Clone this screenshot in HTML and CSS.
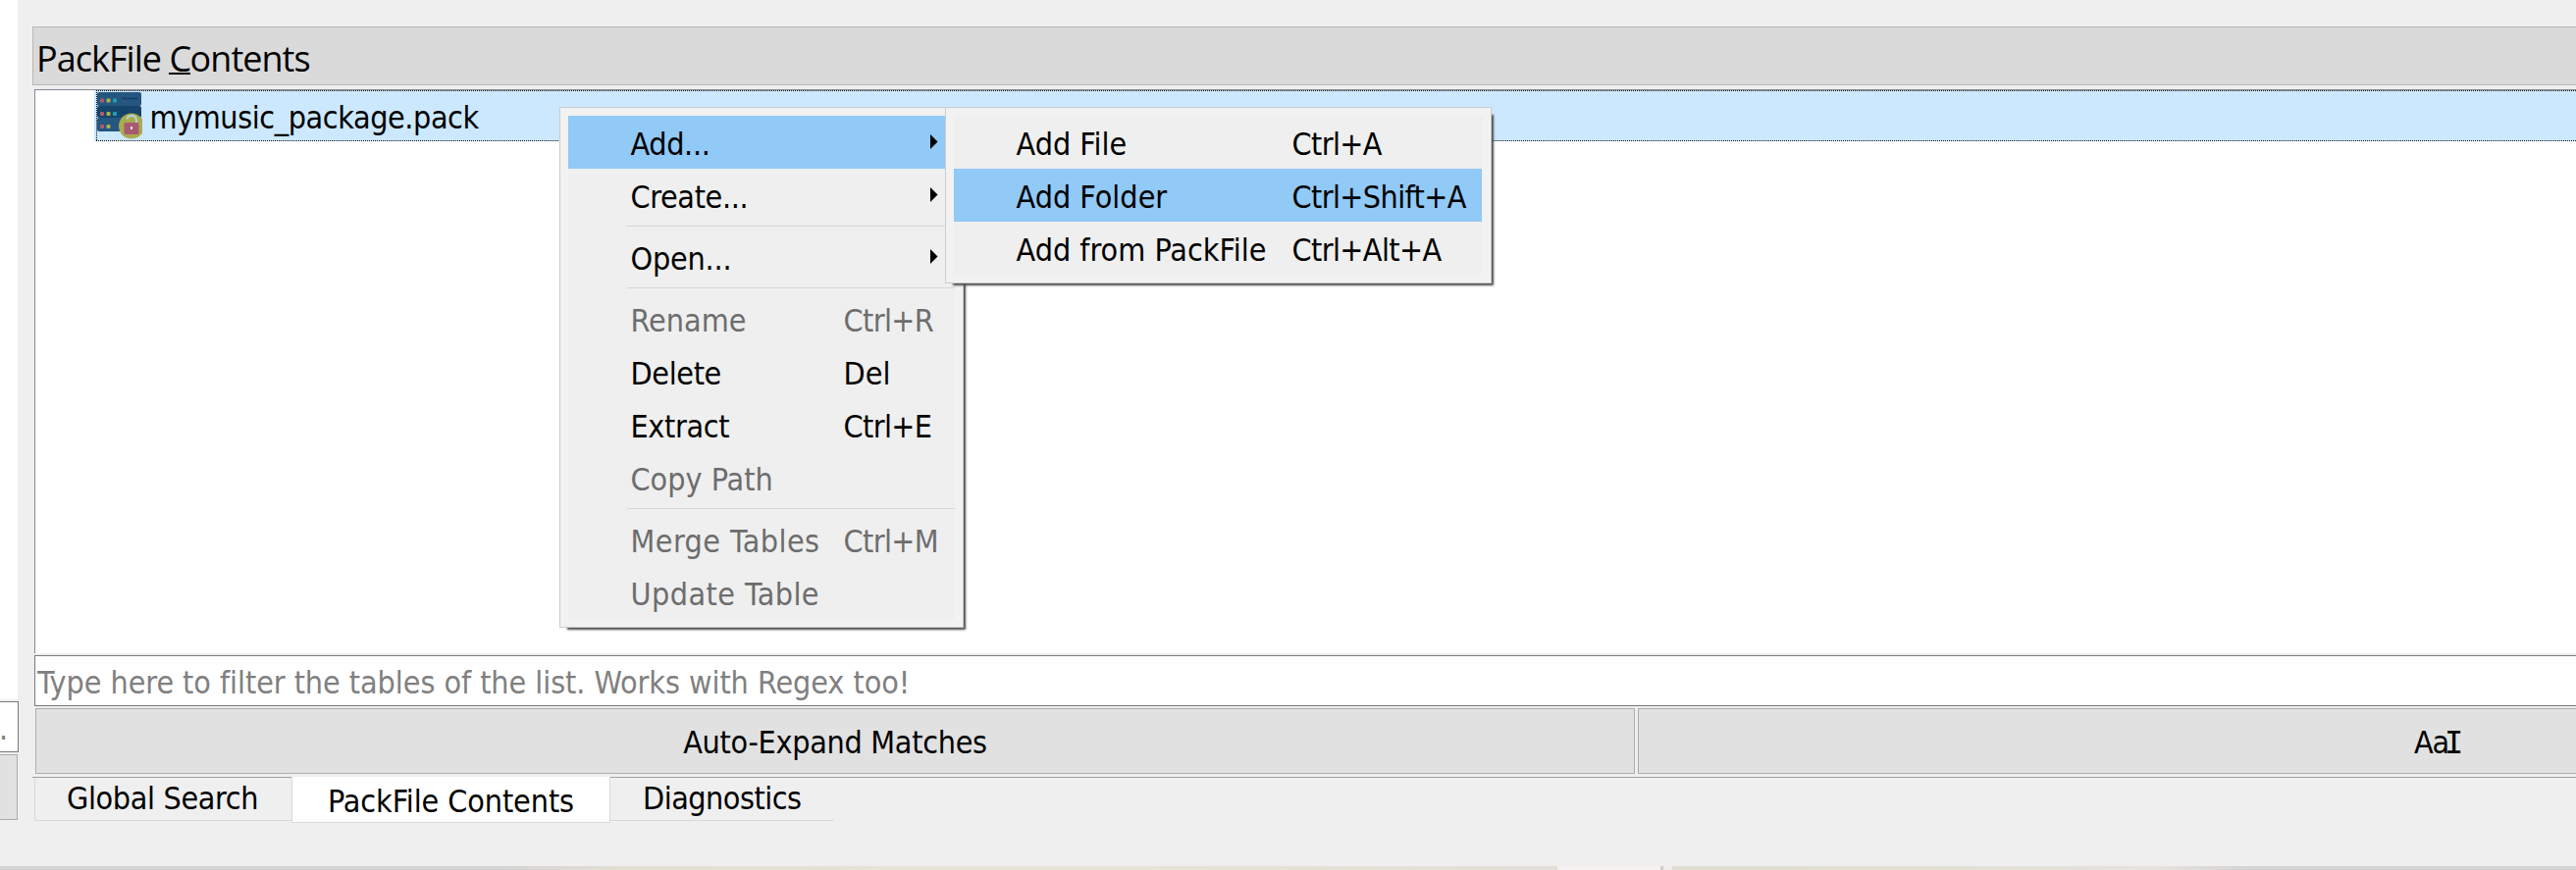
FILE: index.html
```html
<!DOCTYPE html>
<html lang="en">
<head>
<meta charset="utf-8">
<title>PackFile Contents</title>
<link rel="stylesheet" href="styles.css">
</head>
<body>
<div class="window">
  <div class="workspace">
    <aside class="side">
      <div class="side-view"></div>
      <div class="side-input">.</div>
      <div class="side-button"></div>
    </aside>
    <main class="dock">
      <header class="dock-title">PackFile <span class="mnemonic">C</span>ontents</header>
      <section class="tree">
        <div class="tree-row">
          <svg class="pack-icon" width="46" height="50" viewBox="0 0 46 50">
            <rect x="0" y="1" width="45" height="14" rx="2" fill="#24567f"/>
            <rect x="0" y="15" width="45" height="12" rx="2" fill="#16446a"/>
            <rect x="0" y="27" width="45" height="14" rx="2" fill="#24567f"/>
            <path d="M25 7.5h16M25 21h6" stroke="#143d60" stroke-width="1.6"/>
            <g fill="#ac5a73"><rect x="3" y="7.500" width="4" height="4" rx="1"/><rect x="3" y="21" width="4" height="4" rx="1"/><rect x="3" y="34" width="4" height="4" rx="1"/></g>
            <g fill="#aead53"><rect x="9.500" y="7.500" width="4" height="4" rx="1"/><rect x="9.500" y="21" width="4" height="4" rx="1"/><rect x="9.500" y="34" width="4" height="4" rx="1"/></g>
            <g fill="#20a2a8"><rect x="16" y="7.500" width="4" height="4" rx="1"/><rect x="16" y="21" width="4" height="4" rx="1"/></g>
            <circle cx="35" cy="35.500" r="13" fill="#aaab50"/>
            <path d="M30.500 28.500c1-5 9.500-5 9.500 1.500v4" fill="none" stroke="#b5d3df" stroke-width="1.900"/>
            <rect x="27.500" y="32" width="15" height="12" rx="1.500" fill="#a95a70"/>
            <rect x="34" y="36" width="2" height="3" fill="#d6e4f0"/>
          </svg>
          <span class="file-name">mymusic_package.pack</span>
        </div>
      </section>
      <div class="filter">Type here to filter the tables of the list. Works with Regex too!</div>
      <div class="buttons">
        <div class="button expand">Auto-Expand Matches</div>
        <div class="button case">Aa<span class="serif-i">I</span></div>
      </div>
      <nav class="tabs">
        <div class="tab search">Global Search</div>
        <div class="tab active">PackFile Contents</div>
        <div class="tab diagnostics">Diagnostics</div>
      </nav>
    </main>
  </div>
  <div class="backdrop"></div>

  <div class="menu context">
    <div class="item selected"><span class="label tight">Add...</span><i class="arrow"></i></div>
    <div class="item"><span class="label tight">Create...</span><i class="arrow"></i></div>
    <hr class="separator">
    <div class="item"><span class="label snug">Open...</span><i class="arrow"></i></div>
    <hr class="separator">
    <div class="item disabled"><span class="label">Rename</span><span class="keys">Ctrl+R</span></div>
    <div class="item"><span class="label tight">Delete</span><span class="keys plain">Del</span></div>
    <div class="item"><span class="label tight">Extract</span><span class="keys">Ctrl+E</span></div>
    <div class="item disabled"><span class="label">Copy Path</span></div>
    <hr class="separator">
    <div class="item disabled"><span class="label loose">Merge Tables</span><span class="keys">Ctrl+M</span></div>
    <div class="item disabled"><span class="label loose">Update Table</span></div>
  </div>

  <div class="menu submenu">
    <div class="item"><span class="label">Add File</span><span class="keys">Ctrl+A</span></div>
    <div class="item selected"><span class="label">Add Folder</span><span class="keys">Ctrl+Shift+A</span></div>
    <div class="item"><span class="label">Add from PackFile</span><span class="keys">Ctrl+Alt+A</span></div>
  </div>
</div>
</body>
</html>
```
FILE: styles.css
```css
* { box-sizing: border-box; }

body {
  margin: 0;
  overflow: hidden;
  font: 32px "DejaVu Sans Condensed", "DejaVu Sans", sans-serif;
  color: #000;
  white-space: nowrap;
}

.window {
  position: relative;
  display: flex;
  flex-direction: column;
  height: 887px;
  background: #efefef;
  overflow: hidden;
}

.workspace { display: flex; height: 883px; }

.backdrop {
  height: 4px;
  background:
    linear-gradient(90deg, transparent 1587px, #f3f2f0 1587px 1692px, #d2cdc9 1692px 1695px, #efede9 1695px 1704px, transparent 1704px),
    linear-gradient(90deg, #d3d3d3 0 490px, #e2dfd5 640px, #e6e4d9 1000px, #e2dfd8 1600px, #e2ddd2 1750px, #e5e2dc 2200px, #d3d3d3 2300px);
}

/* Neighbouring panel, cut off at the window's left edge */
.side { width: 33px; }
.side-view { width: 18px; height: 713px; background: #fff; }
.side-input {
  width: 19px;
  height: 52px;
  margin: 2px 0;
  border: 1px solid #7a7a7a;
  border-left: 0;
  background: #fff;
  color: #808080;
  line-height: 54px;
  text-indent: -1px;
}
.side-button {
  width: 18px;
  height: 67px;
  border: 1px solid #adadad;
  border-left: 0;
  background: #e1e1e1;
}

.dock { flex: 1; display: flex; flex-direction: column; padding-top: 27px; }

.dock-title {
  height: 60px;
  padding: 7px 0 0 3px;
  border: 1px solid #b9b9b9;
  border-right: 0;
  background: #dadada;
  font: 36px/49px "Open Sans", "Noto Sans", sans-serif;
  letter-spacing: -0.97px;
}
.mnemonic {
  display: inline-block;
  height: 41px;
  border-bottom: 2px solid #000;
  letter-spacing: -1.5px;
  vertical-align: top;
}

.tree {
  height: 575px;
  margin: 4px 0 0 2px;
  padding-left: 60px;
  border: 1px solid #828790;
  border-width: 1px 0 0 1px;
  background: #fff;
}
.tree-row {
  display: flex;
  height: 52px;
  padding-left: 2px;
  background: #cce8ff;
}
/* Dotted focus rectangle */
.tree-row::before {
  content: "";
  position: absolute;
  left: 98px;
  right: -2px;
  top: 92px;
  height: 52px;
  background:
    repeating-linear-gradient(90deg, #111 0 1px, transparent 1px 2px) top / 100% 1px no-repeat,
    repeating-linear-gradient(90deg, #111 0 1px, transparent 1px 2px) bottom / 100% 1px no-repeat,
    repeating-linear-gradient(#111 0 1px, transparent 1px 2px) left / 1px 100% no-repeat;
}
.pack-icon { margin: 1px 0 0 1px; }
.file-name { padding: 5px 0 0 7.5px; line-height: 46px; letter-spacing: -0.42px; }

.filter {
  height: 52px;
  margin: 2px 0 0 2px;
  padding: 5px 0 0 2px;
  border: 1px solid #7a7a7a;
  border-right: 0;
  background: #fff;
  color: #808080;
  line-height: 44px;
  letter-spacing: -0.06px;
}

.buttons { display: flex; gap: 3px; height: 67px; margin: 2px 0 0 3px; }
.button {
  border: 1px solid #adadad;
  background: #e1e1e1;
  line-height: 69px;
}
.expand { width: 1630px; text-align: center; letter-spacing: -0.29px; }
.case { flex: 1; border-right: 0; padding-left: 790px; letter-spacing: -1.2px; }
.serif-i { display: inline-block; width: 11px; font-family: "DejaVu Sans Mono", monospace; text-indent: -4px; }

.tabs {
  display: flex;
  align-items: flex-start;
  height: 47px;
  margin-top: 3px;
  padding-left: 2px;
  border-top: 1px solid #a0a0a0;
}
.tab {
  height: 44px;
  padding-left: 33px;
  border-bottom: 1px solid #d9d9d9;
  line-height: 42px;
}
.search { width: 262px; padding-left: 32px; border-left: 1px solid #d9d9d9; letter-spacing: -0.36px; }
.active {
  width: 325px;
  height: 47px;
  margin-top: -1px;
  padding-left: 36px;
  border: 1px solid #d9d9d9;
  border-top: 0;
  background: #fff;
  line-height: 50px;
  letter-spacing: -0.1px;
}
.diagnostics { width: 228px; letter-spacing: -0.5px; }

.menu {
  position: absolute;
  top: 109px;
  padding: 8px;
  border: 1px solid #ccc;
  background: #f2f2f2;
  box-shadow: 5px 5px 2px -3px #4a4a4a;
}
.menu::before {
  content: "";
  position: absolute;
  inset: 8px;
  background: #efefef;
}
.context { left: 570px; width: 412px; height: 531px; }
.submenu { left: 963px; width: 557px; height: 180px; padding-right: 9px; }

.item {
  position: relative;
  display: grid;
  grid-template-columns: 217px 1fr;
  height: 54px;
  padding: 4px 0 0 63.5px;
  line-height: 50px;
}
.submenu .item { grid-template-columns: 281px 1fr; }
.selected { background: #91c9f7; }
.disabled { color: #6d6d6d; }
.keys { letter-spacing: -0.6px; }
.plain, .label { letter-spacing: 0; }
.label.snug { letter-spacing: -0.2px; }
.label.tight { letter-spacing: -0.36px; }
.label.loose { letter-spacing: 0.43px; }

.arrow {
  justify-self: end;
  width: 8px;
  height: 16px;
  margin: 14.5px 17.500px 0 0;
  background: #000;
  clip-path: polygon(0 0, 100% 50%, 0 100%);
}

.separator {
  position: relative;
  height: 1px;
  margin: 4px 0 4px 60px;
  border: 0;
  background: #d7d7d7;
}
```
